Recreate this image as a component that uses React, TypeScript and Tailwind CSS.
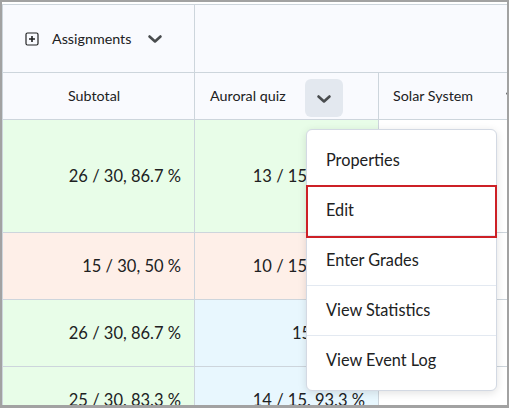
import React from "react";

function Chevron({ className = "" }: { className?: string }) {
  return (
    <svg viewBox="0 0 16 10" className={className} fill="none">
      <path d="M2.5 2.5 L8 7.5 L13.5 2.5" stroke="#494c4e" strokeWidth="2.6" strokeLinecap="round" strokeLinejoin="round" />
    </svg>
  );
}

function PlusBox() {
  return (
    <svg viewBox="0 0 14 14" className="w-[14px] h-[14px]" fill="none">
      <rect x="1" y="1" width="12" height="12" rx="1.5" stroke="#202122" strokeWidth="1.2" />
      <path d="M7 4 V10 M4 7 H10" stroke="#202122" strokeWidth="1.6" />
    </svg>
  );
}

const rows = [
  { h: "h-[113px]", a: "26 / 30, 86.7 %", b: "13 / 15, 86.7 %", ca: "bg-[#e8fde8]", cb: "bg-[#e8fde8]", pb: "justify-end pr-[13px]" },
  { h: "h-[67px]", a: "15 / 30, 50 %", b: "10 / 15, 66.7 %", ca: "bg-[#feefe8]", cb: "bg-[#feefe8]", pb: "justify-end pr-[13px]" },
  { h: "h-[67px]", a: "26 / 30, 86.7 %", b: "15 / 15, 100 %", ca: "bg-[#e8fde8]", cb: "bg-[#e8f7fe]", pb: "justify-start pl-[97px]" },
  { h: "h-[67px]", a: "25 / 30, 83.3 %", b: "14 / 15, 93.3 %", ca: "bg-[#e8fde8]", cb: "bg-[#e8f7fe]", pb: "justify-end pr-[13px]" },
];

const menu = ["Properties", "Edit", "Enter Grades", "View Statistics", "View Event Log"];

export default function App() {
  return (
    <div
      className="relative w-[509px] h-[408px] overflow-hidden border-2 border-b-[3px] border-[#a2a2a2] bg-white text-[#202122]"
      style={{ fontFamily: "Lato, 'Noto Sans', sans-serif" }}
    >
      <div className="h-[2px] bg-white" />
      <div className="border-l border-t border-[#cdd5dc]">
        {/* header row 1 */}
        <div className="flex h-[68px] border-b border-[#cdd5dc] bg-[#f9fafe]">
          <div className="w-[192px] shrink-0 border-r border-[#cdd5dc] flex items-center pl-[22px]">
            <PlusBox />
            <span className="ml-[13px] text-[14.3px]">Assignments</span>
            <Chevron className="ml-[16px] w-[16px] h-[10px]" />
          </div>
          <div className="flex-1" />
        </div>
        {/* header row 2 */}
        <div className="flex h-[47px] border-b border-[#cdd5dc] bg-[#f9fafe] text-[14.3px]">
          <div className="w-[192px] shrink-0 border-r border-[#cdd5dc] flex items-center pl-[65px]">
            Subtotal
          </div>
          <div className="w-[184px] shrink-0 border-r border-[#cdd5dc] flex items-center pl-[15px]">
            <span>Auroral quiz</span>
            <div className="ml-[19px] mt-[4px] w-[38px] h-[38px] rounded-[6px] bg-[#e3e8ef] flex items-center justify-center">
              <Chevron className="w-[16px] h-[10px] mt-[2px]" />
            </div>
          </div>
          <div className="flex-1 min-w-0 flex items-center pl-[14px] whitespace-nowrap">
            <span className="w-[112px] shrink-0">Solar System</span>
            <Chevron className="w-[16px] h-[10px] shrink-0" />
          </div>
        </div>
        {/* data rows */}
        {rows.map((r, i) => (
          <div key={i} className={`flex ${r.h} border-b border-[#cdd5dc] text-[16.5px]`}>
            <div className={`w-[192px] shrink-0 border-r border-[#cdd5dc] flex items-center justify-end pr-[13px] ${r.ca}`}>
              {r.a}
            </div>
            <div className={`w-[184px] shrink-0 border-r border-[#cdd5dc] flex items-center whitespace-nowrap overflow-hidden ${r.pb} ${r.cb}`}>
              {r.b}
            </div>
            <div className="flex-1 bg-white" />
          </div>
        ))}
      </div>

      {/* context menu */}
      <div className="absolute left-[304px] top-[127px] w-[191px] rounded-[6px] border border-[#d3d9e3] bg-white py-[5px] shadow-[0_2px_8px_rgba(0,0,0,0.12)]">
        {menu.map((m, i) => (
          <div
            key={m}
            className={`h-[50px] flex items-center pl-[19px] text-[16.3px] ${i > 0 ? "border-t border-[#e3e9f1]" : ""}`}
          >
            {m}
          </div>
        ))}
        <div className="absolute left-[-1px] right-[-1px] top-[55px] h-[53px] border-2 border-[#cd2026]" />
      </div>
    </div>
  );
}
